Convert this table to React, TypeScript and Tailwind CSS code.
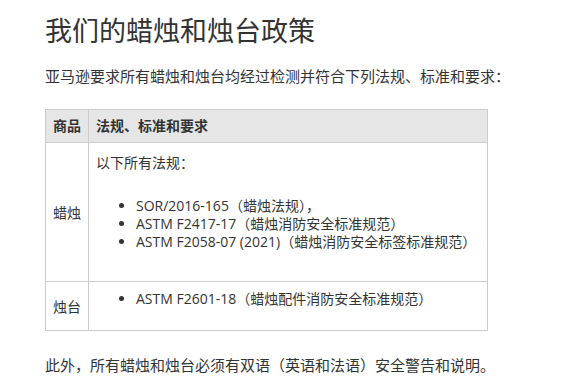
export default function App() {
  const font = { fontFamily: '"Open Sans", "Noto Sans CJK SC", sans-serif' };
  return (
    <div className="min-h-screen bg-white pl-[45px] pt-[13px] text-[#333]" style={font}>
      <h1 className="text-[27px] leading-[36px] font-normal">我们的蜡烛和烛台政策</h1>
      <p className="mt-[15px] text-[15px] leading-[24px]">
        亚马逊要求所有蜡烛和烛台均经过检测并符合下列法规、标准和要求：
      </p>

      <table className="mt-[21px] w-[443px] border-collapse text-[14px]">
        <thead>
          <tr className="bg-[#e6e6e6]">
            <th className="border border-[#ccc] px-[7px] py-[8px] text-left font-bold leading-[16px] w-[43px] whitespace-nowrap">
              商品
            </th>
            <th className="border border-[#ccc] px-[7px] py-[8px] text-left font-bold leading-[16px]">
              法规、标准和要求
            </th>
          </tr>
        </thead>
        <tbody>
          <tr>
            <td className="border border-[#ccc] px-[7px] align-middle whitespace-nowrap">蜡烛</td>
            <td className="border border-[#ccc] px-[7px] py-[8px] align-top">
              <p className="leading-[24px]">以下所有法规：</p>
              <ul className="mt-[22px] mb-[22px] list-disc pl-10 leading-[18px]">
                <li>SOR/2016-165（蜡烛法规），</li>
                <li>ASTM F2417-17（蜡烛消防安全标准规范）</li>
                <li>ASTM F2058-07 (2021)（蜡烛消防安全标签标准规范）</li>
              </ul>
            </td>
          </tr>
          <tr>
            <td className="border border-[#ccc] px-[7px] align-middle whitespace-nowrap">烛台</td>
            <td className="border border-[#ccc] px-[7px] py-[8px] align-top">
              <ul className="mb-[14px] list-disc pl-10 leading-[18px]">
                <li>ASTM F2601-18（蜡烛配件消防安全标准规范）</li>
              </ul>
            </td>
          </tr>
        </tbody>
      </table>

      <p className="mt-[22px] text-[15px] leading-[24px]">
        此外，所有蜡烛和烛台必须有双语（英语和法语）安全警告和说明。
      </p>
    </div>
  );
}
